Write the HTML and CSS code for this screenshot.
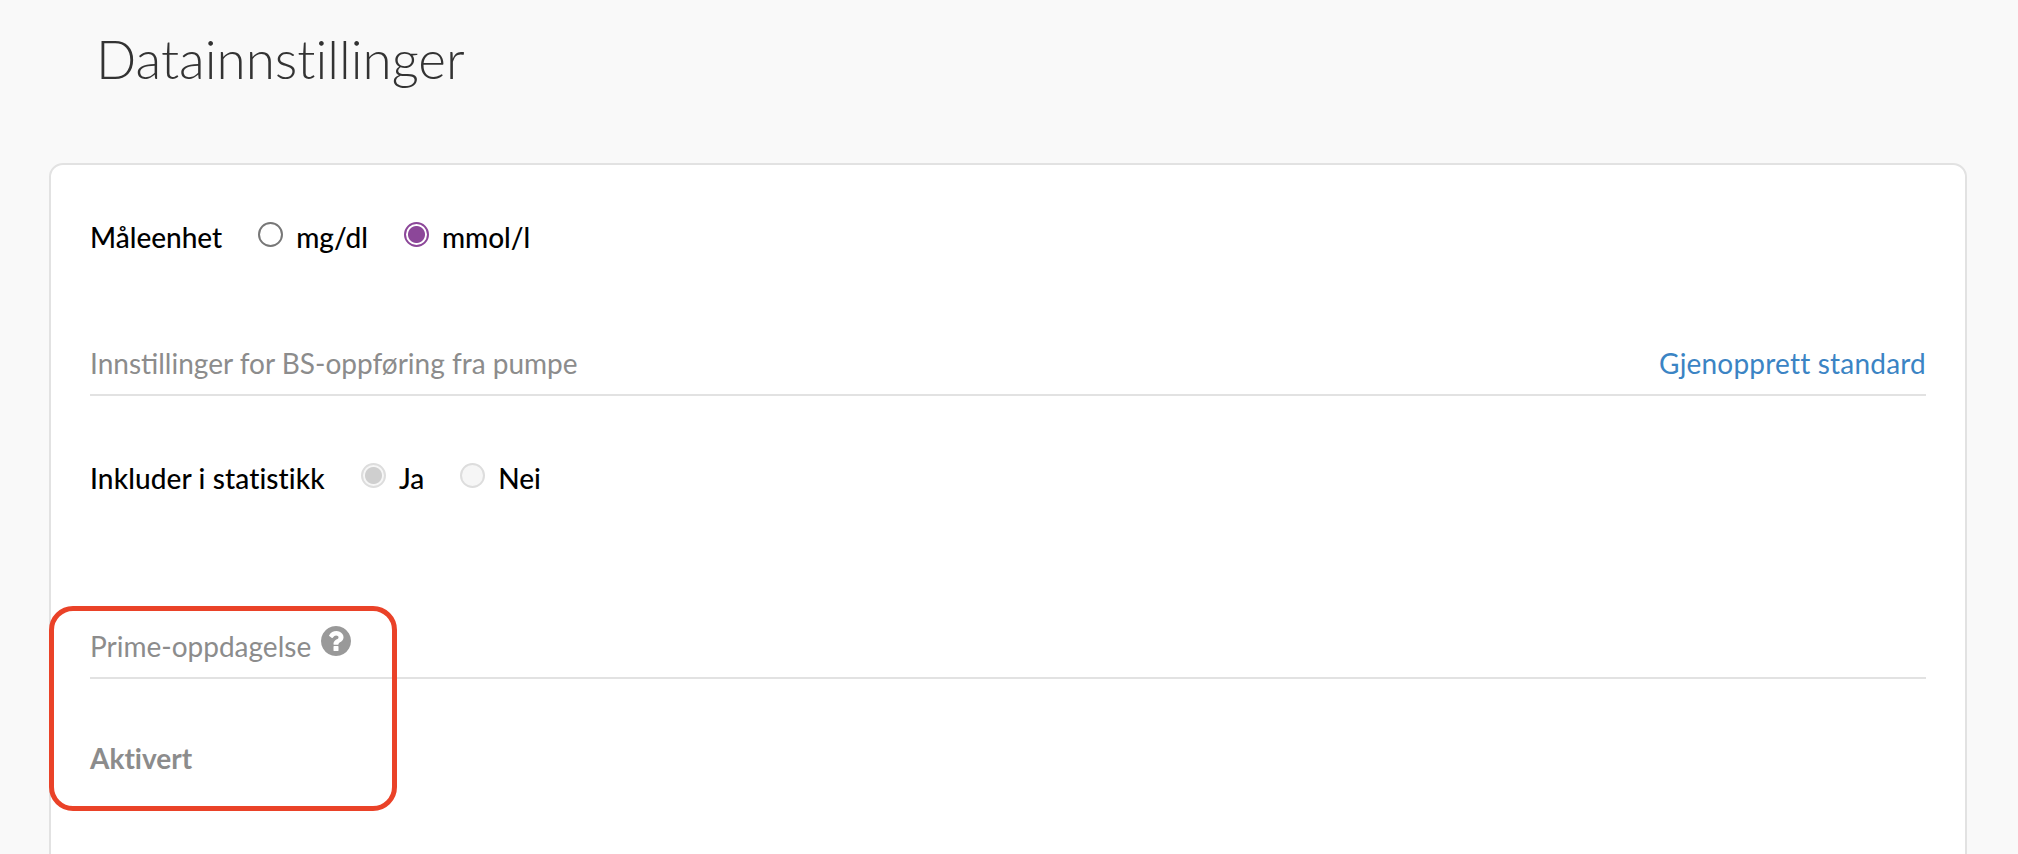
FILE: index.html
```html
<!DOCTYPE html>
<html lang="no">
<head>
    <meta charset="UTF-8">
    <meta name="viewport" content="width=device-width, initial-scale=1.0">
    <title>Datainnstillinger</title>
    <link rel="stylesheet" href="styles.css">
</head>
<body>
    <h1 class="page-title">Datainnstillinger</h1>
    <div class="card">
        <div class="radio-row unit-row">
            <span class="row-label">Måleenhet</span>
            <label class="radio-option"><input type="radio" name="unit">mg/dl</label>
            <label class="radio-option"><input type="radio" name="unit" checked>mmol/l</label>
        </div>

        <div class="section-head pump-head">
            <span class="section-title">Innstillinger for BS-oppføring fra pumpe</span>
            <a class="reset-link" href="#">Gjenopprett standard</a>
        </div>

        <div class="radio-row stats-row">
            <span class="row-label">Inkluder i statistikk</span>
            <label class="radio-option"><input type="radio" name="stats" checked disabled>Ja</label>
            <label class="radio-option"><input type="radio" name="stats" disabled>Nei</label>
        </div>

        <div class="section-head prime-head">
            <span class="section-title">Prime-oppdagelse</span>
            <svg class="help-icon" viewBox="128 128 1536 1536" aria-hidden="true">
                <path d="M1024 1376v-192q0-14-9-23t-23-9h-192q-14 0-23 9t-9 23v192q0 14 9 23t23 9h192q14 0 23-9t9-23zm256-672q0-88-55.5-163t-138.5-116-170-41q-243 0-371 213-15 24 8 42l132 100q7 6 19 6 16 0 25-12 53-68 86-92 34-24 86-24 48 0 85.5 26t37.5 59q0 38-20 61t-68 45q-63 28-115.5 86.5t-52.5 125.5v36q0 14 9 23t23 9h192q14 0 23-9t9-23q0-19 21.5-49.5t54.5-49.5q32-18 49-28.5t46-35 44.5-48 28-60.5 12.5-81zm384 192q0 209-103 385.5t-279.5 279.5-385.5 103-385.5-103-279.5-279.5-103-385.5 103-385.5 279.5-279.5 385.5-103 385.5 103 279.5 279.5 103 385.5z"/>
            </svg>
        </div>

        <div class="status-text">Aktivert</div>

        <div class="highlight-box"></div>
    </div>
</body>
</html>
```

FILE: styles.css
```css
/* Side */
html, body {
    height: 100%;
}
body {
    margin: 0;
    padding: 0 51px 0 49px;
    box-sizing: border-box;
    overflow: hidden;
    background-color: #f9f9f9;
    font-family: "Lato", sans-serif;
    font-size: 28px;
    color: #000;
}
.page-title {
    margin: 0;
    padding: 28px 0 0 47px;
    height: 163px;
    box-sizing: border-box;
    font-size: 53px;
    line-height: 62px;
    font-weight: 300;
    font-variant-ligatures: none;
    color: #333;
}

/* Kort */
.card {
    position: relative;
    height: 900px;
    box-sizing: border-box;
    padding: 52px 39px 0 39px;
    background: #fff;
    border: 2px solid #e2e2e2;
    border-radius: 14px;
}

/* Radiorader */
.radio-row {
    display: flex;
    align-items: center;
    height: 40px;
    line-height: 40px;
}
.row-label {
    font-weight: 500;
    margin-right: 36px;
}
.stats-row .row-label {
    letter-spacing: 0.12px;
}
.radio-option {
    display: flex;
    align-items: center;
    margin-right: 36px;
    font-weight: 500;
}
.radio-option input {
    appearance: none;
    width: 25px;
    height: 25px;
    margin: -5px 13px 0 0;
    box-sizing: border-box;
    background: #fff;
    border: 2px solid #777;
    border-radius: 50%;
}
.radio-option input:checked {
    border-color: #8c4799;
    background: radial-gradient(circle, #8c4799 0, #8c4799 8px, #fff 9px);
}
.radio-option input:disabled {
    border-color: #ddd;
    background: #f6f6f6;
}
.radio-option input:disabled:checked {
    background: radial-gradient(circle, #cfcfcf 0, #cfcfcf 8px, #f6f6f6 9px);
}

/* Seksjoner */
.section-head {
    display: flex;
    align-items: center;
    height: 46px;
    padding-bottom: 8px;
    border-bottom: 2px solid #e2e2e2;
}
.section-title {
    color: #8c8c8c;
}
.reset-link {
    margin-left: auto;
    color: #3b84c4;
    letter-spacing: 0.2px;
    text-decoration: none;
}
.pump-head {
    margin-top: 83px;
}
.stats-row {
    margin-top: 62px;
}
.prime-head {
    margin-top: 125px;
}
.help-icon {
    width: 30px;
    height: 30px;
    margin: -11px 0 0 10px;
    fill: #999;
}
.status-text {
    margin-top: 59px;
    line-height: 40px;
    font-weight: 700;
    font-variant-ligatures: none;
    color: #8c8c8c;
}

/* Rød markering */
.highlight-box {
    position: absolute;
    left: -2px;
    top: 441px;
    width: 348px;
    height: 205px;
    box-sizing: border-box;
    border: 5px solid #ea4228;
    border-radius: 24px;
}
```
